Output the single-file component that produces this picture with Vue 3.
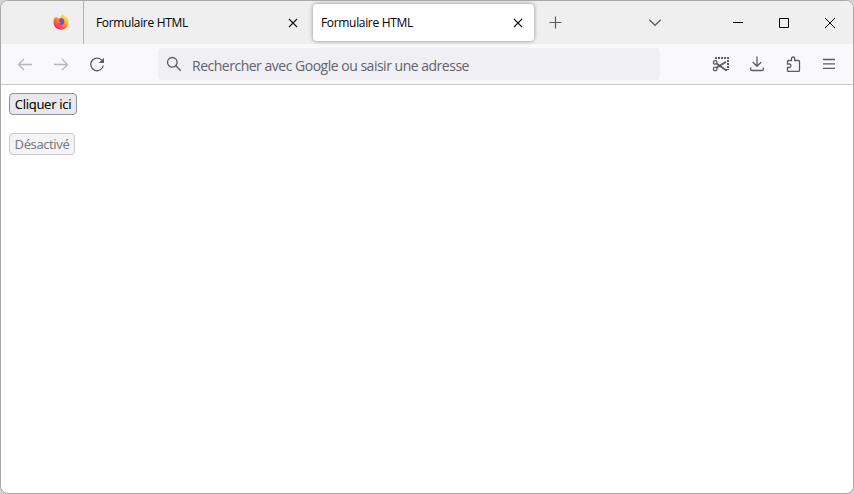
<script setup>
const title = 'Formulaire HTML'
</script>

<template>
  <div class="window">
    <header class="tabs">
      <div class="pinned">
        <svg width="16" height="16" viewBox="0 0 16 16">
          <defs>
            <linearGradient id="flame" x1="0.85" y1="0.1" x2="0.2" y2="0.95">
              <stop offset="0" stop-color="#fff04a" />
              <stop offset="0.35" stop-color="#ffb52a" />
              <stop offset="0.62" stop-color="#ff6a35" />
              <stop offset="1" stop-color="#f0246b" />
            </linearGradient>
          </defs>
          <path fill="url(#flame)" d="M9.200.1c1.400.8 2.500 1.900 3 3.100l.6-.6c1.600 1.500 2.600 3.400 2.700 5.500.3 4.300-3.100 7.600-7.400 7.600C3.700 15.700.500 12.400.500 8.300c0-2.300.7-4.200 1.800-5.500l.5 1.400 1.400-1.900.4 1.800c1.300-.4 2.300-.2 3 .2C7.700 2.700 8.200 1.200 9.200.1z" />
          <path fill="#8046dc" d="M7.600 4.300c2.300-.3 3.800 1.300 3.700 3.400-.1 2-1.600 3.300-3.400 3.200-1.600 0-2.900-.8-3.200-2.100 1.200.5 2.100 0 3.100-.5L5.300 7c.1-.8.700-1.500 2.300-2.700z" />
          <path fill="#ff8a2d" d="M3.700 6.200c1-.7 2.100-.6 2.900-.1-.3.700-1 .8-1.200 1.400.6 1.200 1.700 1.100 2.700.8-.4 1-2.300 1.700-4.200.5z" />
        </svg>
      </div>
      <div class="tab">
        <span class="label">{{ title }}</span>
        <svg class="x" width="10" height="10" viewBox="0 0 10 10"><path d="M1 1l8 8M9 1L1 9" /></svg>
      </div>
      <div class="tab active">
        <span class="label">{{ title }}</span>
        <svg class="x" width="10" height="10" viewBox="0 0 10 10"><path d="M1 1l8 8M9 1L1 9" /></svg>
      </div>
      <svg class="plus" width="13" height="13" viewBox="0 0 13 13"><path d="M6.500.500v12M.500 6.500h12" /></svg>
      <div class="grow"></div>
      <svg class="chevron" width="14" height="14" viewBox="0 0 14 14"><path d="M1.300 3.700L7 9.300l5.700-5.600" /></svg>
      <div class="controls">
        <div><svg width="12" height="12" viewBox="0 0 12 12"><path d="M1 5.500h10" /></svg></div>
        <div><svg width="12" height="12" viewBox="0 0 12 12"><path d="M1.500 1.500h9v9h-9z" /></svg></div>
        <div><svg width="12" height="12" viewBox="0 0 12 12"><path d="M1 1l10 10M11 1L1 11" /></svg></div>
      </div>
    </header>

    <nav class="toolbar">
      <div class="nav">
        <svg class="off" width="16" height="16" viewBox="0 0 16 16"><path d="M15 8.500H1.500M7 3L1.500 8.500 7 14" /></svg>
        <svg class="off" width="16" height="16" viewBox="0 0 16 16"><path d="M1 8.500h13.500M9 3l5.500 5.500L9 14" /></svg>
        <svg width="16" height="16" viewBox="0 0 16 16">
          <path d="M13.400 5A6.300 6.300 0 1 0 14.300 9.500" />
          <path class="fill" d="M15 1.800v5.300H9.700z" />
        </svg>
      </div>
      <div class="address">
        <svg width="16" height="16" viewBox="0 0 16 16"><circle cx="6.300" cy="6.300" r="4.800" /><path d="M9.800 9.800l5 5" /></svg>
        <span>Rechercher avec Google ou saisir une adresse</span>
      </div>
      <div class="tools">
        <svg width="18" height="18" viewBox="0 0 18 18">
          <path class="dots" d="M3 3h14M16 5v10M13 15h3" />
          <circle cx="3.200" cy="7.400" r="1.800" /><circle cx="3.200" cy="14" r="1.800" />
          <path class="bold" d="M4.500 8.600l9.300 6.400M4.500 12.800L14 6.800" />
        </svg>
        <svg class="download" width="16" height="16" viewBox="0 0 16 16"><path d="M8 .500v9.500M3.700 6L8 10.300 12.300 6M1.700 11.500v1.700q0 1.300 1.300 1.300h10q1.300 0 1.300-1.300v-1.700" /></svg>
        <svg class="extensions" width="16" height="16" viewBox="0 0 16 16"><path d="M5.500 4.500V2.600a1.600 1.600 0 0 1 3.200 0v1.900h3.600q1.200 0 1.200 1.200v8.600q0 1.200-1.200 1.200H2.700q-1.200 0-1.200-1.200v-2.800h1.700a1.700 1.700 0 0 0 0-3.500H1.500V5.700q0-1.200 1.200-1.200z" /></svg>
        <svg class="menu" width="16" height="16" viewBox="0 0 16 16"><path d="M2 3.500h12M2 7.800h12M2 12.300h12" /></svg>
      </div>
    </nav>

    <main class="page">
      <button class="click">Cliquer ici</button>
      <button class="disabled" disabled>Désactivé</button>
    </main>
  </div>
</template>

<style>
body {
  background: #d4d4d4;
  overflow: hidden;
}
</style>

<style scoped>
.window {
  box-sizing: border-box;
  width: 854px;
  height: 494px;
  border: 1px solid #a9a9a9;
  border-radius: 8px;
  background: #fff;
  overflow: hidden;
  font-family: "Open Sans", "Noto Sans", sans-serif;
}
svg {
  display: block;
  flex: none;
  fill: none;
  stroke: #5b5b66;
  stroke-width: 1.3;
}
.tabs {
  height: 43px;
  display: flex;
  align-items: center;
  background: #efefef;
}
.pinned {
  box-sizing: border-box;
  width: 83px;
  height: 43px;
  padding: 13px 0 0 52px;
  border-right: 1px solid #b0b0b0;
}
.pinned svg {
  stroke: none;
}
.tab {
  box-sizing: border-box;
  width: 221px;
  height: 37px;
  margin-left: 4px;
  padding: 0 11px 0 8px;
  display: flex;
  align-items: center;
  justify-content: space-between;
  font-size: 12px;
  color: #000;
}
.active {
  border-radius: 4px;
  background: #fff;
  box-shadow: 0 0 4px rgba(0, 0, 0, 0.42);
}
.label {
  letter-spacing: -0.33px;
  white-space: nowrap;
}
.x {
  stroke: #15141a;
  stroke-width: 1.1;
}
.plus {
  margin-left: 15px;
  stroke-width: 1.2;
}
.grow {
  flex: 1;
}
.chevron {
  margin-right: 53px;
}
.controls {
  display: flex;
}
.controls div {
  width: 46px;
  display: flex;
  justify-content: center;
}
.controls svg {
  stroke: #000;
  stroke-width: 1;
}
.toolbar {
  box-sizing: border-box;
  height: 41px;
  display: flex;
  align-items: center;
  background: #f9f9fb;
  border-bottom: 1px solid #cacace;
}
.nav {
  width: 157px;
  box-sizing: border-box;
  padding-left: 16px;
  display: flex;
  gap: 20px;
}
.off {
  opacity: 0.42;
}
.fill {
  fill: #5b5b66;
  stroke: none;
}
.address {
  box-sizing: border-box;
  width: 502px;
  height: 32px;
  padding: 0 8px;
  display: flex;
  align-items: center;
  gap: 10px;
  border-radius: 4px;
  background: #f0f0f4;
  color: #62626c;
  font-size: 14px;
}
.address span {
  letter-spacing: -0.49px;
  white-space: nowrap;
  padding-top: 2px;
}
.tools {
  display: flex;
  align-items: center;
  padding-left: 52px;
}
.download {
  margin-left: 19px;
}
.extensions {
  margin-left: 21px;
}
.menu {
  margin-left: 19px;
}
.dots {
  stroke-width: 2;
  stroke-dasharray: 2 1;
}
.bold {
  stroke-width: 1.8;
}
.page {
  padding: 8px;
  display: flex;
  flex-direction: column;
  align-items: flex-start;
  gap: 18px;
}
button {
  box-sizing: border-box;
  height: 22px;
  padding: 0;
  border: 1px solid #8f8f9d;
  border-radius: 4px;
  background: #e9e9ed;
  color: #000;
  font: 13px/20px "Noto Sans", "Open Sans", sans-serif;
  letter-spacing: -0.32px;
  white-space: nowrap;
}
.click {
  width: 68px;
}
.disabled {
  width: 66px;
  border-color: #c9c9cf;
  background: #f4f4f6;
  color: #7c7c7c;
  letter-spacing: -0.42px;
}
</style>
